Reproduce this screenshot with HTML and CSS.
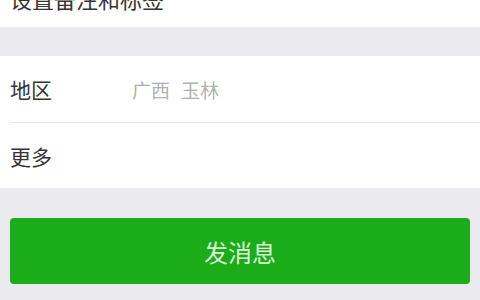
FILE: index.html
```html
<!DOCTYPE html>
<html lang="zh-CN">
<head>
<meta charset="utf-8">
<link rel="stylesheet" href="styles.css">
</head>
<body>
<div class="top"><div class="top-text">设置备注和标签</div></div>
<div class="spacer"></div>
<div class="card">
  <div class="row">
    <div class="label">地区</div>
    <div class="value"><span>广西</span><span>玉林</span></div>
  </div>
  <div class="row row-divided">
    <div class="label">更多</div>
  </div>
</div>
<div class="actions">
  <button class="btn">发消息</button>
</div>
</body>
</html>
```
FILE: styles.css
```css
html, body {
  margin: 0;
  padding: 0;
}
body {
  width: 480px;
  height: 300px;
  overflow: hidden;
  background: #ebeaee;
  font-family: "Noto Sans CJK SC", "Noto Sans", sans-serif;
  color: #353535;
}
.top {
  height: 27px;
  background: #fff;
  overflow: hidden;
  padding-left: 10px;
}
.top-text {
  font-size: 22px;
  line-height: 22px;
  margin-top: -13px;
}
.spacer {
  height: 29px;
}
.card {
  background: #fff;
  padding-left: 10px;
}
.row {
  display: flex;
  align-items: center;
  height: 66px;
}
.row-divided {
  border-top: 1px solid #e6e6e6;
  height: 65px;
}
.label {
  width: 122px;
  font-size: 21px;
}
.value {
  display: flex;
  gap: 11px;
  font-size: 19px;
  color: #b0b0b0;
}
.actions {
  padding: 30px 10px 0;
}
.btn {
  display: block;
  width: 100%;
  height: 66px;
  border: none;
  border-radius: 4px;
  background: #1aad19;
  color: #dcf3d6;
  font-family: "Noto Sans CJK SC", "Noto Sans", sans-serif;
  font-size: 24px;
  padding: 0;
}
```
